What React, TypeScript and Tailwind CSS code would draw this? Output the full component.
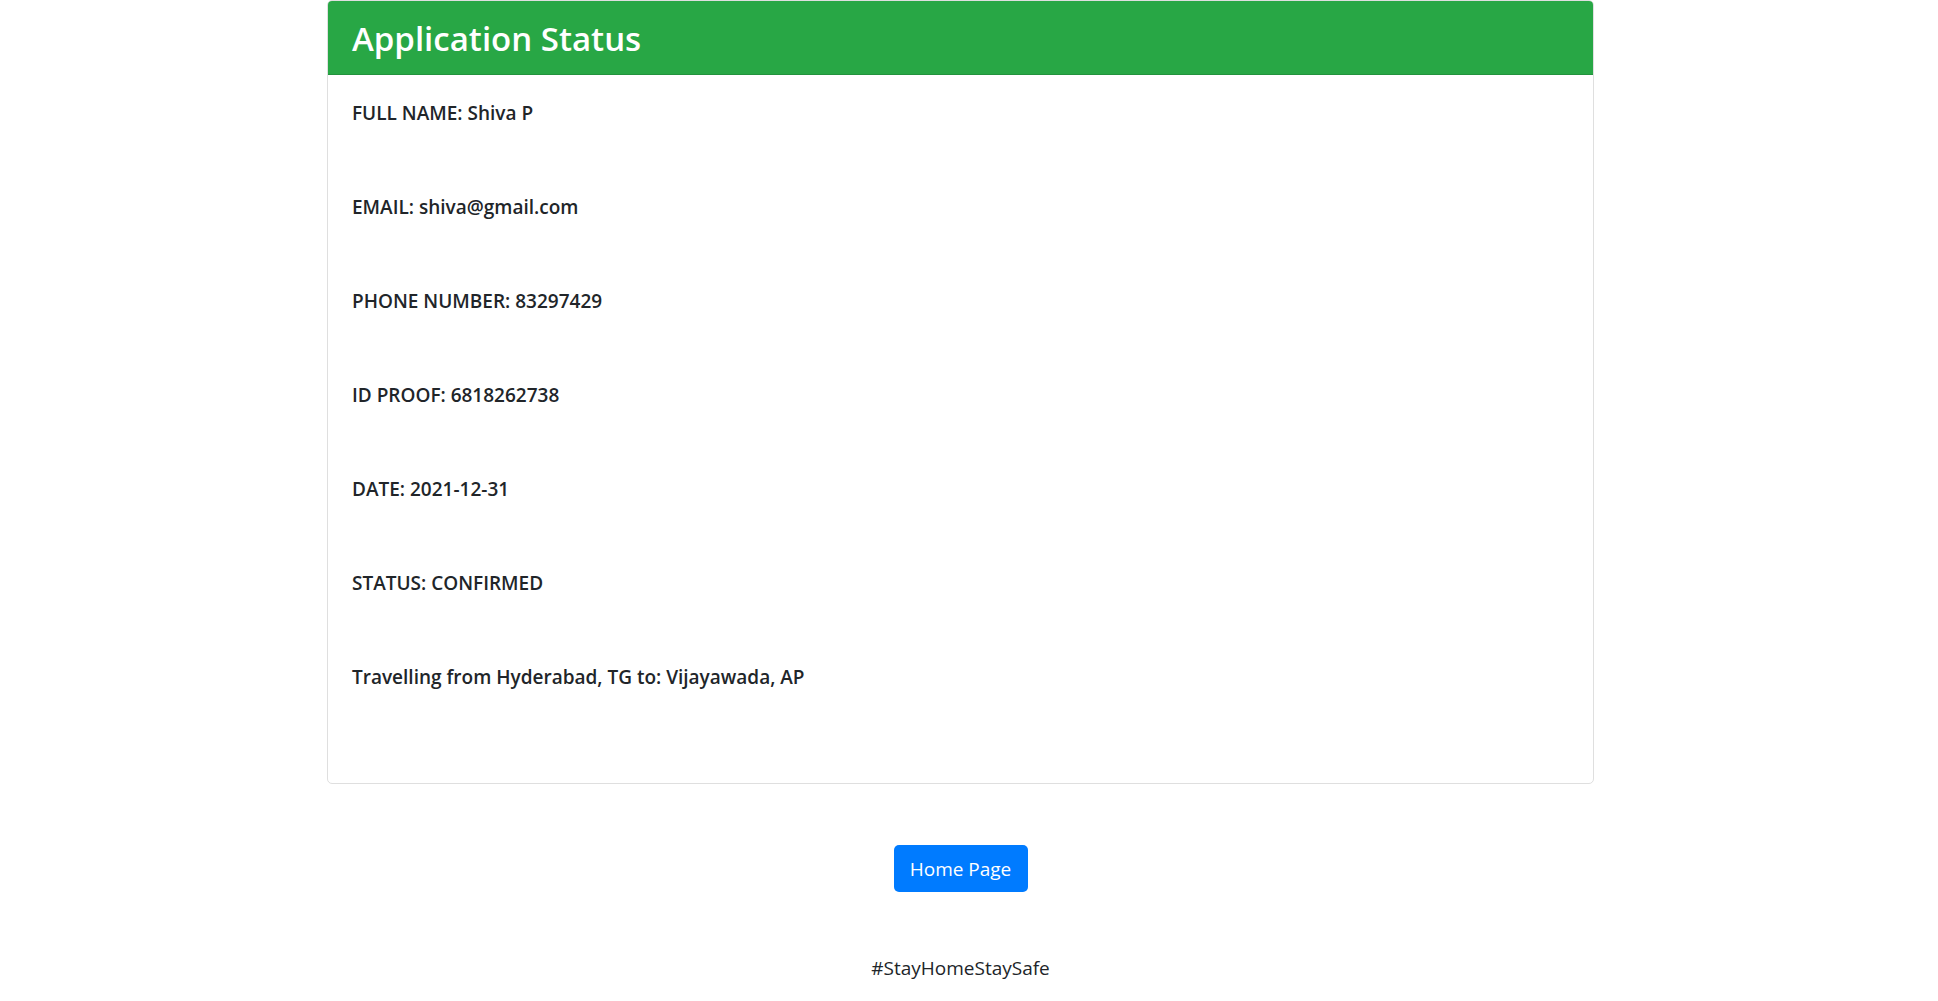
import React from "react";

const rows = [
  "FULL NAME: Shiva P",
  "EMAIL: shiva@gmail.com",
  "PHONE NUMBER: 83297429",
  "ID PROOF: 6818262738",
  "DATE: 2021-12-31",
  "STATUS: CONFIRMED",
  "Travelling from Hyderabad, TG to: Vijayawada, AP",
];

function StatusCard() {
  return (
    <div className="w-[1267px] border border-[#dfdfdf] rounded-[5px] bg-white overflow-hidden">
      <div className="h-[74px] bg-[#28a745] border-b border-[#23923d] flex items-center px-[24px] pt-[2px]">
        <h2 className="text-[33px] font-semibold text-white leading-none">Application Status</h2>
      </div>
      <div className="px-[24px] pt-[23px] pb-[27px]">
        {rows.map((row, rowIndex) => (
          <div key={rowIndex} className="h-[94px]">
            <p className="text-[19px] leading-[30px] font-semibold text-[#212529]">{row}</p>
          </div>
        ))}
      </div>
    </div>
  );
}

function App() {
  return (
    <div className="min-h-screen bg-white font-['Open_Sans',sans-serif] pr-[17px]">
      <div className="flex justify-center">
        <StatusCard />
      </div>
      <div className="flex justify-center mt-[61px]">
        <button className="w-[134px] h-[47px] rounded-[5px] bg-[#007bff] text-white text-[19px] pt-[2px]">
          Home Page
        </button>
      </div>
      <p className="text-center text-[19px] text-[#212529] mt-[62px]">#StayHomeStaySafe</p>
    </div>
  );
}

export default App;
